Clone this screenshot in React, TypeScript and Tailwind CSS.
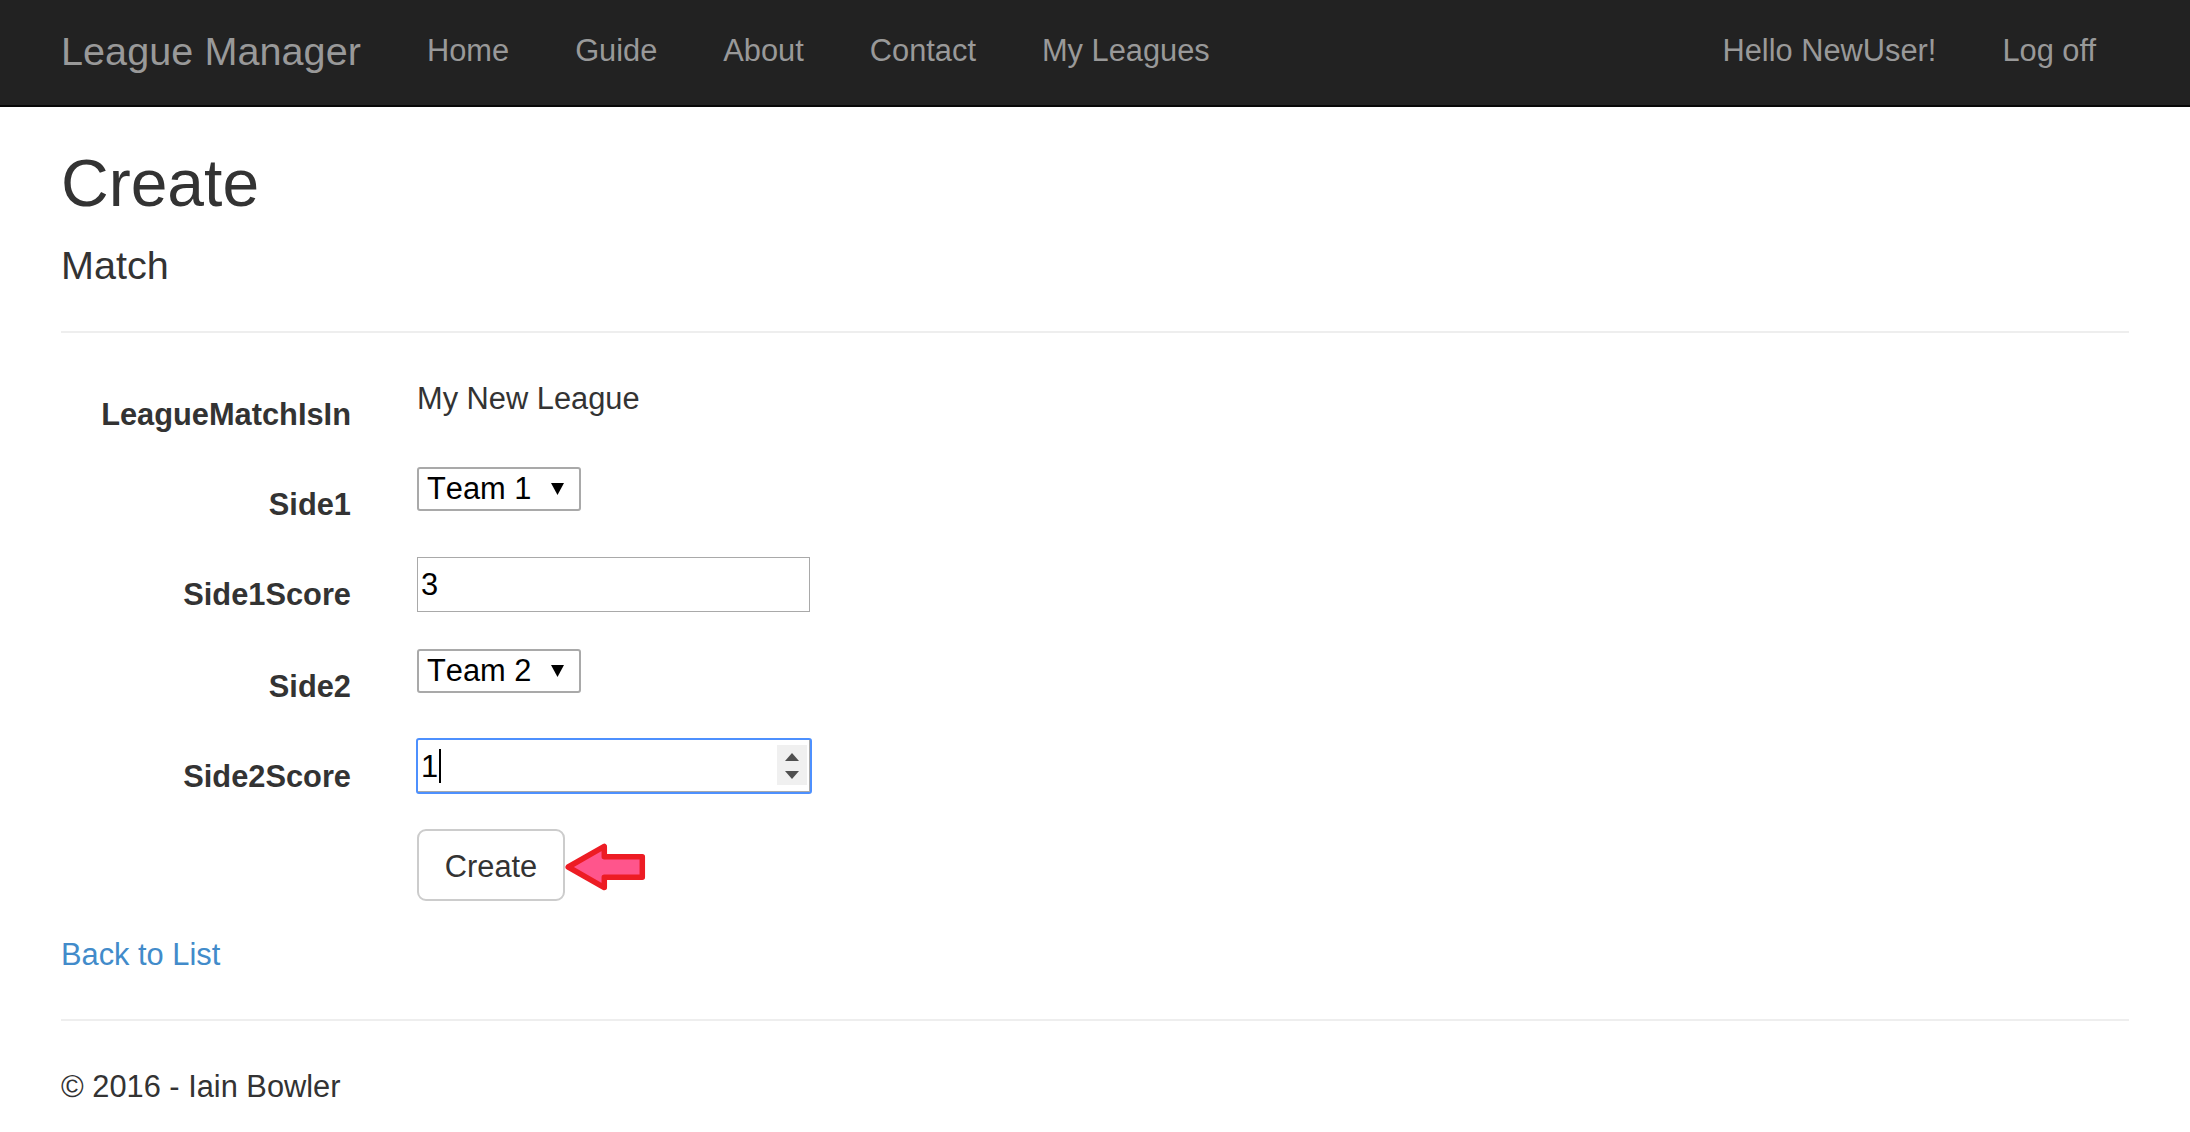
import type { ReactNode } from "react";

const links = ["Home", "Guide", "About", "Contact", "My Leagues"];

function NavLink({ children }: { children: ReactNode }) {
  return (
    <a href="#" className="block px-[33px] leading-[44px]">
      {children}
    </a>
  );
}

function Row({ label, height, children }: { label?: string; height: string; children: ReactNode }) {
  return (
    <div className={`flex ${height}`}>
      <div className="w-[290px] shrink-0 pt-[17px] text-right font-bold leading-[44px]">{label}</div>
      <div className="ml-[66px] flex items-start">{children}</div>
    </div>
  );
}

function Select({ value }: { value: string }) {
  return (
    <div className="mt-px flex h-11 w-[164px] items-center justify-between rounded-[3px] border-2 border-[#a9a9a9] bg-white pl-2 pr-[15px] text-black [font-kerning:none]">
      <span className="leading-[40px]">{value}</span>
      <svg className="h-3 w-[13px]" viewBox="0 0 13 12">
        <path d="M0 0h13L6.5 12z" fill="#000" />
      </svg>
    </div>
  );
}

export default function App() {
  return (
    <div className="h-[1132px] overflow-hidden bg-white font-['Liberation_Sans',Arial,sans-serif] text-[30.8px] text-[#333]">
      <nav className="flex h-[107px] border-b-2 border-[#080808] bg-[#222] pl-[61px] pr-[61px] pt-[29px] text-[#999]">
        <a href="#" className="mr-[33px] text-[39.6px] leading-[44px] tracking-[0.05px]">
          League Manager
        </a>
        <div className="flex">
          {links.map((l) => (
            <NavLink key={l}>{l}</NavLink>
          ))}
        </div>
        <div className="ml-auto flex">
          <NavLink>Hello NewUser!</NavLink>
          <NavLink>Log off</NavLink>
        </div>
      </nav>

      <main className="mx-[61px] pt-[33px]">
        <h2 className="text-[66px] leading-[87px]">Create</h2>
        <h4 className="mt-4 text-[39.6px] leading-[44px]">Match</h4>
        <hr className="mt-11 border-t-2 border-[#eee]" />

        <form className="mt-[43px]">
          <Row label="LeagueMatchIsIn" height="h-[90px]">
            <span className="mt-px leading-[44px]">My New League</span>
          </Row>
          <Row label="Side1" height="h-[90px]">
            <Select value="Team 1" />
          </Row>
          <Row label="Side1Score" height="h-[92px]">
            <div className="mt-px h-[55px] w-[393px] border border-[#a9a9a9] pl-[3px] leading-[53px] text-black">3</div>
          </Row>
          <Row label="Side2" height="h-[90px]">
            <Select value="Team 2" />
          </Row>
          <Row label="Side2Score" height="h-[91px]">
            <div className="-ml-px flex h-14 w-[396px] rounded-[3px] border-2 border-[#4d90fe]">
              <div className="flex flex-1 items-start border-b border-r border-[#a9a9a9] pl-[3px] pr-0.5 text-black">
                <span className="w-[18px] leading-[53px]">1</span>
                <span className="mt-[9px] h-[34px] w-0.5 bg-black" />
                <svg className="ml-auto mt-[5px] h-10 w-[30px] bg-[#f0f0f0]" viewBox="0 0 30 40">
                  <path d="M8 16h14L15 8zM8 26h14l-7 8z" fill="#505050" />
                </svg>
              </div>
            </div>
          </Row>
          <Row height="h-[104px]">
            <button
              type="button"
              className="h-[72px] w-[148px] rounded-[9px] border-2 border-[#ccc] bg-white pt-[3px] leading-[65px]"
            >
              <span className="block pt-px leading-[64px]">Create</span>
            </button>
            <svg className="mt-[14px] h-12 w-[81px]" viewBox="0 0 81 48">
              <path
                d="M3.2 24 39.3 3.4V13.7H77.3V34.3H39.3V44.6Z"
                fill="#ff558c"
                stroke="#ed1c24"
                strokeWidth="5.5"
                strokeLinejoin="round"
              />
            </svg>
          </Row>
        </form>

        <a href="#" className="block leading-[44px] text-[#428bca]">
          Back to List
        </a>
        <hr className="mt-[42px] border-t-2 border-[#eee]" />
        <footer className="mt-11 leading-[44px]">© 2016 - Iain Bowler</footer>
      </main>
    </div>
  );
}
